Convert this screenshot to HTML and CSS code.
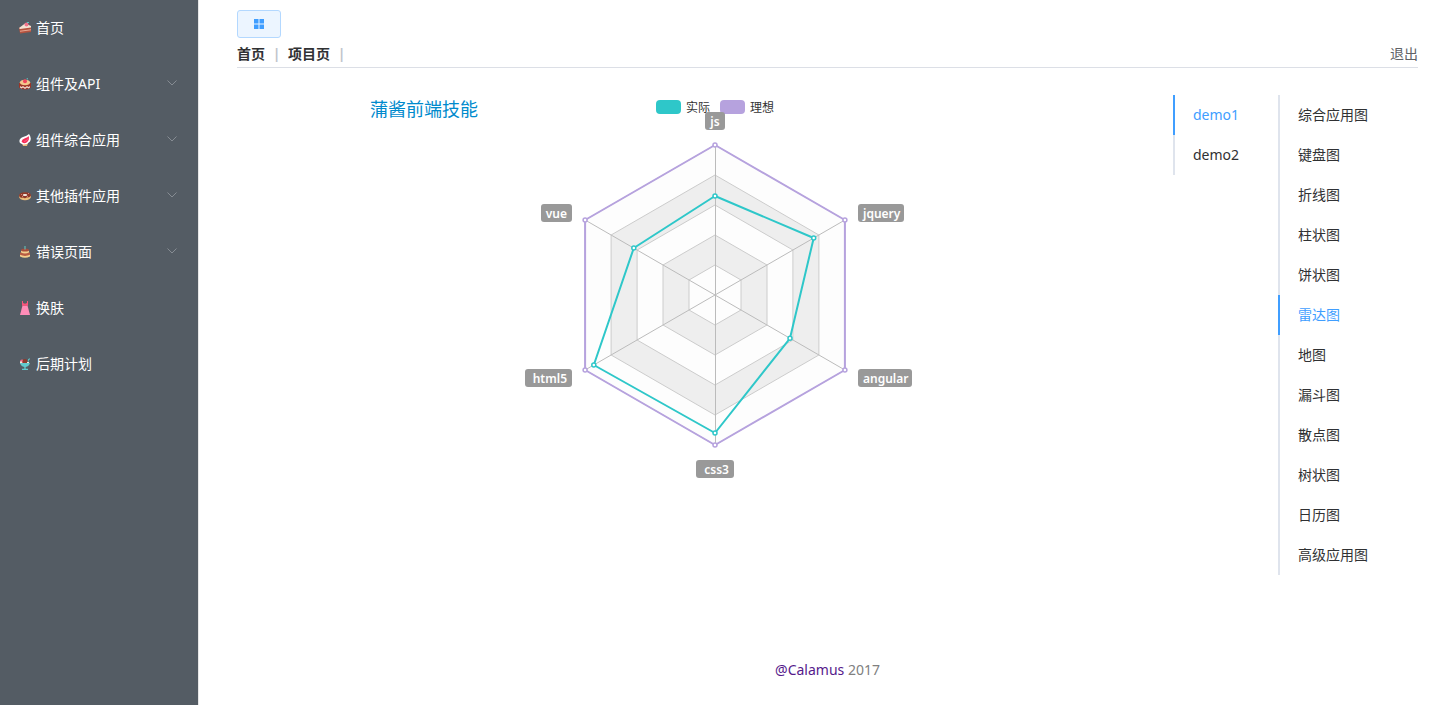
FILE: index.html
```html
<!DOCTYPE html>
<html lang="zh-CN">
<head>
<meta charset="utf-8">
<title>雷达图</title>
<meta name="viewport" content="width=device-width, initial-scale=1">
<link rel="stylesheet" href="styles.css">
</head>
<body>
<div class="layout">
  <nav class="sidebar">
    <a class="menu-item" href="#home">
      <svg class="menu-icon" viewBox="0 0 12 12" aria-hidden="true"><path d="M0 6 7 2l5 3v5L1 11.500z" fill="#b5533f"/><path d="M0 6 6 1.500 12 4v1.500L1 7z" fill="#f5e3d3"/><path d="M1 8.800 12 7.300v1L1 9.800z" fill="#e9a793"/><circle cx="7.500" cy="2.500" r="2" fill="#f2748c"/><path d="M8 0h2v1H8z" fill="#5fc4c4"/></svg>
      <span>首页</span>
    </a>
    <button class="menu-item" type="button">
      <svg class="menu-icon" viewBox="0 0 12 12" aria-hidden="true"><path d="M0 5h12v4.500Q6 13.500 0 9.500z" fill="#9c3426"/><ellipse cx="6" cy="4.500" rx="5.200" ry="2.800" fill="#f2c78c"/><circle cx="6" cy="3.200" r="2" fill="#f0445c"/><path d="M7 1 9 0v1.500z" fill="#5fc4c4"/><path d="M1 8l1.500 1L4 8l2 1.500L8 8l1.500 1L11 8v1.500L9.500 10.500 8 9.500 6 11 4 9.500l-1.500 1L1 9.500z" fill="#f4ddd0"/></svg>
      <span>组件及API</span>
      <svg class="chevron" viewBox="0 0 10 6" aria-hidden="true"><path d="M.5.500 5 5 9.500.500"/></svg>
    </button>
    <button class="menu-item" type="button">
      <svg class="menu-icon" viewBox="0 0 12 12" aria-hidden="true"><path d="M3 9h6l-1 3H4z" fill="#e7b77d"/><path d="M1 9Q-1 5 4 3 8 2 10 0 13 4 11 7.500 8 11 4 10.500z" fill="#fff"/><path d="M2.500 7.500Q3 5 6 4.200 9 3.500 9.500 2 11 5.500 8 8.200 4.500 10.500 2.500 7.500z" fill="#f72b57"/><path d="M5 7.500Q8 7 9 4.500" stroke="#f77b95" stroke-width=".7" fill="none"/></svg>
      <span>组件综合应用</span>
      <svg class="chevron" viewBox="0 0 10 6" aria-hidden="true"><path d="M.5.500 5 5 9.500.500"/></svg>
    </button>
    <button class="menu-item" type="button">
      <svg class="menu-icon" viewBox="0 0 12 12" aria-hidden="true"><ellipse cx="6" cy="6.500" rx="6" ry="3.800" fill="#edbd7b"/><path d="M0 6Q0 2.500 6 2.300T12 6Q10 8 8 7.300 6 9 4 7.500 1 8.500 0 6z" fill="#8e3828"/><ellipse cx="6" cy="5" rx="2.300" ry="1" fill="#f4eee7"/><path d="M2 4.500h1m6-1h1M3 6.500h1m4 0h1" stroke="#ef9a8f" stroke-width=".7"/></svg>
      <span>其他插件应用</span>
      <svg class="chevron" viewBox="0 0 10 6" aria-hidden="true"><path d="M.5.500 5 5 9.500.500"/></svg>
    </button>
    <button class="menu-item" type="button">
      <svg class="menu-icon" viewBox="0 0 12 12" aria-hidden="true"><path d="M1 8h10v2.500Q6 13 1 10.500z" fill="#f4cf8e"/><path d="M1 6.500h10v2.300Q6 11 1 8.800z" fill="#b85c43"/><path d="M2 4.500h8v2Q6 8.500 2 6.500z" fill="#f4cf8e"/><ellipse cx="6" cy="4" rx="4" ry="1.600" fill="#a84d3b"/><path d="M6 0v3.500" stroke="#62b9b3" stroke-width="1.200"/></svg>
      <span>错误页面</span>
      <svg class="chevron" viewBox="0 0 10 6" aria-hidden="true"><path d="M.5.500 5 5 9.500.500"/></svg>
    </button>
    <a class="menu-item" href="#skin">
      <svg class="menu-icon" viewBox="0 0 12 14" aria-hidden="true"><path d="M3.500 4.500h5L11 14H1z" fill="#ff8db8"/><path d="M3 0h1v2l2 .8L8 2V0h1v4.800H3z" fill="#f9547c"/></svg>
      <span>换肤</span>
    </a>
    <a class="menu-item" href="#plan">
      <svg class="menu-icon" viewBox="0 0 12 12" aria-hidden="true"><path d="m8.500 5 1.300-4H11" stroke="#62c9cd" fill="none"/><circle cx="3" cy="3.500" r="2" fill="#f5688a"/><circle cx="6" cy="3.500" r="2.500" fill="#8d3a2c"/><path d="M1 3.500h2v2H1zM8 4h2v1.500H8z" fill="#f6e8d6"/><path d="M1 5h10Q10 8.500 6.700 9v1.800H9V12H3v-1.200h2.300V9Q2 8.500 1 5z" fill="#62c9cd"/></svg>
      <span>后期计划</span>
    </a>
  </nav>

  <main class="main">
    <button class="toggle" type="button" aria-label="菜单">
      <svg viewBox="0 0 10 10" aria-hidden="true"><path d="M0 0h4.500v4.500H0zM5.500 0H10v4.500H5.500zM0 5.500h4.500V10H0zM5.500 5.500H10V10H5.500z"/></svg>
    </button>
    <header class="topbar">
      <div class="crumbs">
        <a href="#home">首页</a><span class="sep">|</span><a href="#project">项目页</a><span class="sep">|</span>
      </div>
      <a class="logout" href="#logout">退出</a>
    </header>

    <section class="content">
      <div class="chart-area">
        <svg class="chart" viewBox="0 0 700 400" role="img" aria-label="蒲酱前端技能">
          <text class="chart-title" x="5" y="21">蒲酱前端技能</text>
          <rect x="291" y="5" width="25" height="14" rx="4" fill="#2ec7c9"/>
          <text class="legend" x="321" y="17">实际</text>
          <rect x="355" y="5" width="25" height="14" rx="4" fill="#b6a2de"/>
          <text class="legend" x="385" y="17">理想</text>

          <g class="rings">
            <path class="light" d="M350 50 479.900 125V275L350 350 220.100 275V125z"/>
            <path class="dark" d="M350 80 453.900 140V260L350 320 246.100 260V140z"/>
            <path class="light" d="M350 110 427.900 155V245L350 290 272.100 245V155z"/>
            <path class="dark" d="M350 140 402 170V230L350 260 298 230V170z"/>
            <path class="light" d="M350 170 376 185V215L350 230 324 215V185z"/>
          </g>
          <path class="axes" d="M350.500 50V350M220.100 125 479.900 275M479.900 125 220.100 275"/>

          <g class="series ideal">
            <path d="M350 50 479.900 125V275L350 350 220.100 275V125z"/>
            <circle cx="350" cy="50" r="2"/><circle cx="479.900" cy="125" r="2"/><circle cx="479.900" cy="275" r="2"/><circle cx="350" cy="350" r="2"/><circle cx="220.100" cy="275" r="2"/><circle cx="220.100" cy="125" r="2"/>
          </g>
          <g class="series actual">
            <path d="M350 101 448.700 143 425 243.300 350 338 228.800 270 268.800 153z"/>
            <circle cx="350" cy="101" r="2"/><circle cx="448.700" cy="143" r="2"/><circle cx="425" cy="243.300" r="2"/><circle cx="350" cy="338" r="2"/><circle cx="228.800" cy="270" r="2"/><circle cx="268.800" cy="153" r="2"/>
          </g>

          <g class="tags">
            <rect x="340" y="17" width="20" height="18" rx="3"/><text x="350" y="31" text-anchor="middle">js</text>
            <rect x="493" y="109" width="46" height="18" rx="3"/><text x="498" y="123">jquery</text>
            <rect x="493" y="274" width="54" height="18" rx="3"/><text x="498" y="288">angular</text>
            <rect x="331" y="365" width="38" height="18" rx="3"/><text x="364" y="379" text-anchor="end">css3</text>
            <rect x="160" y="274" width="47" height="18" rx="3"/><text x="202" y="288" text-anchor="end">html5</text>
            <rect x="176" y="109" width="31" height="18" rx="3"/><text x="202" y="123" text-anchor="end">vue</text>
          </g>
        </svg>
      </div>

      <div class="tabs demos" role="tablist" aria-orientation="vertical">
        <button class="tab active" type="button" role="tab" aria-selected="true">demo1</button>
        <button class="tab" type="button" role="tab" aria-selected="false">demo2</button>
      </div>
      <div class="tabs kinds" role="tablist" aria-orientation="vertical">
        <button class="tab" type="button" role="tab" aria-selected="false">综合应用图</button>
        <button class="tab" type="button" role="tab" aria-selected="false">键盘图</button>
        <button class="tab" type="button" role="tab" aria-selected="false">折线图</button>
        <button class="tab" type="button" role="tab" aria-selected="false">柱状图</button>
        <button class="tab" type="button" role="tab" aria-selected="false">饼状图</button>
        <button class="tab active" type="button" role="tab" aria-selected="true">雷达图</button>
        <button class="tab" type="button" role="tab" aria-selected="false">地图</button>
        <button class="tab" type="button" role="tab" aria-selected="false">漏斗图</button>
        <button class="tab" type="button" role="tab" aria-selected="false">散点图</button>
        <button class="tab" type="button" role="tab" aria-selected="false">树状图</button>
        <button class="tab" type="button" role="tab" aria-selected="false">日历图</button>
        <button class="tab" type="button" role="tab" aria-selected="false">高级应用图</button>
      </div>
    </section>

    <footer class="footer"><a href="#calamus">@Calamus</a> 2017</footer>
  </main>
</div>
</body>
</html>
```

FILE: styles.css
```css
* {
  box-sizing: border-box;
}

body {
  margin: 0;
  background: #fff;
  color: #303133;
  font-family: "Noto Sans", "Noto Sans CJK SC", sans-serif;
  font-size: 14px;
  line-height: 20px;
}

a {
  color: inherit;
  text-decoration: none;
}

button {
  font: inherit;
  color: inherit;
  cursor: pointer;
}

.layout {
  display: flex;
  min-height: 100vh;
}

/* Sidebar */
.sidebar {
  display: flex;
  flex-direction: column;
  flex: 0 0 199px;
  border-right: 1px solid #e6e6e6;
  background: #545c64;
}

.menu-item {
  display: flex;
  align-items: center;
  gap: 5px;
  height: 56px;
  padding: 0 21px 0 19px;
  border: 0;
  background: none;
  color: #fff;
  text-align: left;
}

.menu-icon {
  width: 12px;
  height: 14px;
}

.chevron {
  width: 10px;
  height: 6px;
  margin: 0 0 2px auto;
  fill: none;
  stroke: #868c93;
}

/* Header */
.main {
  flex: 1;
  min-width: 0;
  padding: 10px 20px 0 38px;
}

.toggle {
  display: flex;
  align-items: center;
  justify-content: center;
  width: 44px;
  height: 28px;
  padding: 0;
  border: 1px solid #b3d8ff;
  border-radius: 3px;
  background: #ecf5ff;
}

.toggle svg {
  width: 10px;
  height: 10px;
  fill: #409eff;
}

.topbar {
  display: flex;
  justify-content: space-between;
  margin-top: 5px;
  padding-bottom: 2px;
  border-bottom: 1px solid #dcdfe6;
  line-height: 22px;
}

.crumbs {
  display: flex;
  font-weight: 700;
}

.sep {
  width: 23px;
  color: #c0c4cc;
  text-align: center;
}

.logout {
  color: #606266;
}

/* Chart and tab lists */
.content {
  display: flex;
  align-items: flex-start;
  margin-top: 27px;
}

.chart-area {
  display: flex;
  flex: 1;
  justify-content: center;
  min-width: 0;
  padding-left: 20px;
}

.chart {
  width: 100%;
  max-width: 700px;
}

.chart-title {
  fill: #008acd;
  font-size: 18px;
}

.legend {
  fill: #333;
  font-size: 12px;
}

.rings {
  stroke: #ccc;
}

.light {
  fill: #fdfdfd;
}

.dark {
  fill: #eee;
}

.axes {
  fill: none;
  stroke: #bbb;
}

.series path {
  fill: none;
  stroke-width: 2;
  stroke-linejoin: bevel;
}

.series circle {
  fill: #fff;
}

.ideal {
  stroke: #b6a2de;
}

.actual {
  stroke: #2ec7c9;
}

.series circle {
  stroke-width: 1.5;
}

.tags rect {
  fill: #999;
}

.tags text {
  fill: #fff;
  font-size: 12px;
  font-weight: 600;
}

.tabs {
  display: flex;
  flex-direction: column;
}

.demos {
  flex: 0 0 105px;
}

.kinds {
  flex: 0 0 140px;
}

.tab {
  height: 40px;
  padding: 0 18px;
  border: 0;
  border-left: 2px solid #dfe4ed;
  background: none;
  text-align: left;
}

.tab.active {
  border-left-color: #409eff;
  color: #409eff;
}

.footer {
  padding: 85px 0 20px;
  color: #808080;
  text-align: center;
}

.footer a {
  color: #551a8b;
}
```
